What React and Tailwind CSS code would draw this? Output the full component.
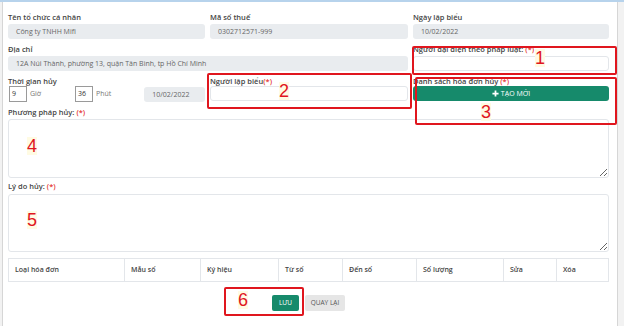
import React from 'react';

const Req = () => <span className="text-[#e53935]">(*)</span>;

const Label = ({ children, mb = 'mb-[2px]' }) => (
  <div className={`h-[10px] leading-[10px] text-[7.5px] font-semibold text-[#444] whitespace-nowrap ${mb}`}>{children}</div>
);

const ReadOnly = ({ value }) => (
  <div className="h-[15px] rounded-[3px] bg-[#e9ecef] pl-[8px] text-[7px] leading-[15px] text-[#666] whitespace-nowrap overflow-hidden">{value}</div>
);

const Blank = () => (
  <div className="h-[15px] rounded-[3px] bg-white border border-[#e3e6ea]" />
);

// red annotation frame + number drawn over the form
const Num = ({ pos, children }) => (
  <span className={`absolute text-[18px] leading-[18px] text-[#e0161e] bg-[#fffbe3] font-['Liberation_Sans',sans-serif] ${pos}`}>{children}</span>
);

const Mark = ({ box, num, numPos }) => (
  <>
    <div className={`absolute border-2 border-[#e0161e] rounded-[2px] pointer-events-none ${box}`} />
    <Num pos={numPos}>{num}</Num>
  </>
);

const COLS = [
  ['Loại hóa đơn', 'w-[116px]'],
  ['Mẫu số', 'w-[76px]'],
  ['Ký hiệu', 'w-[78px]'],
  ['Từ số', 'w-[64px]'],
  ['Đến số', 'w-[74px]'],
  ['Số lượng', 'w-[87px]'],
  ['Sửa', 'w-[53px]'],
  ['Xóa', 'flex-1'],
];

export default function App() {
  return (
    <div className="w-[624px] h-[326px] overflow-hidden bg-[#f2f2f2] flex flex-col font-['Open_Sans',sans-serif]">
      <div className="h-[2px] bg-[#b7d3ec] shrink-0" />
      <div className="flex flex-1 min-h-0">
        <div className="relative ml-[2px] w-[616px] bg-white border-l border-r border-[#d6d6d6] pl-[5px] pr-[8px] pt-[10px]">
          <div className="grid grid-cols-[197px_198px_1fr] gap-x-[5px] gap-y-[5px]">
            <div>
              <Label>Tên tổ chức cá nhân</Label>
              <ReadOnly value="Công ty TNHH Mifi" />
            </div>
            <div>
              <Label>Mã số thuế</Label>
              <ReadOnly value="0302712571-999" />
            </div>
            <div>
              <Label>Ngày lập biểu</Label>
              <ReadOnly value="10/02/2022" />
            </div>

            <div className="col-span-2">
              <Label>Địa chỉ</Label>
              <ReadOnly value="12A Núi Thành, phường 13, quận Tân Bình, tp Hồ Chí Minh" />
            </div>
            <div>
              <Label>Người đại diện theo pháp luật: <Req /></Label>
              <Blank />
            </div>

            <div>
              <Label mb="mb-0">Thời gian hủy</Label>
              <div className="flex items-center h-[16px] text-[7px] leading-[14px] text-[#777]">
                <div className="w-[18px] h-[16px] ml-[1px] border border-[#9a9a9a] pl-[2px] text-[#333]">9</div>
                <span className="ml-[3px]">Giờ</span>
                <div className="w-[18px] h-[16px] ml-[34px] border border-[#9a9a9a] pl-[2px] text-[#333]">36</div>
                <span className="ml-[3px]">Phút</span>
                <div className="w-[61px] h-[15px] ml-[33px] rounded-[3px] bg-[#e9ecef] pl-[8px] leading-[15px] text-[#666]">10/02/2022</div>
              </div>
            </div>
            <div>
              <Label mb="mb-0">Người lập biểu<Req /></Label>
              <Blank />
            </div>
            <div>
              <Label mb="mb-0">Danh sách hóa đơn hủy <Req /></Label>
              <button className="w-full h-[15px] rounded-[3px] bg-[#168a6b] text-white text-[7px] leading-[15px] flex items-center justify-center gap-[2px]">
                <svg width="7" height="7" viewBox="0 0 8 8"><path d="M4 0.5v7M0.5 4h7" stroke="#fff" strokeWidth="2" /></svg>
                TẠO MỚI
              </button>
            </div>
          </div>

          <div className="mt-[5px]">
            <Label>Phương pháp hủy: <Req /></Label>
            <textarea className="block w-full h-[59px] rounded-[3px] border border-[#e3e6ea] resize-y outline-none" />
          </div>
          <div className="mt-[3px]">
            <Label mb="mb-[3px]">Lý do hủy: <Req /></Label>
            <textarea className="block w-full h-[58px] rounded-[3px] border border-[#e3e6ea] resize-y outline-none" />
          </div>

          <div className="mt-[6px] h-[24px] flex border border-[#e3e6ea] text-[7px] font-semibold text-[#444]">
            {COLS.map(([h, w], i) => (
              <div key={h} className={`${w} h-full flex items-center pl-[6px] ${i < COLS.length - 1 ? 'border-r border-[#e3e6ea]' : ''}`}>{h}</div>
            ))}
          </div>

          <div className="mt-[13px] flex justify-center gap-[6px]">
            <button className="h-[16px] w-[27px] rounded-[2px] bg-[#168a6b] text-white text-[6.5px]">LƯU</button>
            <button className="h-[16px] w-[40px] rounded-[2px] bg-[#e6e6e6] text-[#555] text-[6.5px]">QUAY LẠI</button>
          </div>

          <Mark box="left-[409px] top-[44px] w-[205px] h-[29px]" num="1" numPos="left-[532px] top-[47px]" />
          <Mark box="left-[204px] top-[71px] w-[205px] h-[36px]" num="2" numPos="left-[276px] top-[80px]" />
          <Mark box="left-[412px] top-[75px] w-[202px] h-[48px]" num="3" numPos="left-[478px] top-[101px]" />
          <Num pos="left-[24px] top-[135px]">4</Num>
          <Num pos="left-[24px] top-[209px]">5</Num>
          <Mark box="left-[221px] top-[285px] w-[80px] h-[29px]" num="6" numPos="left-[235px] top-[289px]" />
        </div>
      </div>
    </div>
  );
}
